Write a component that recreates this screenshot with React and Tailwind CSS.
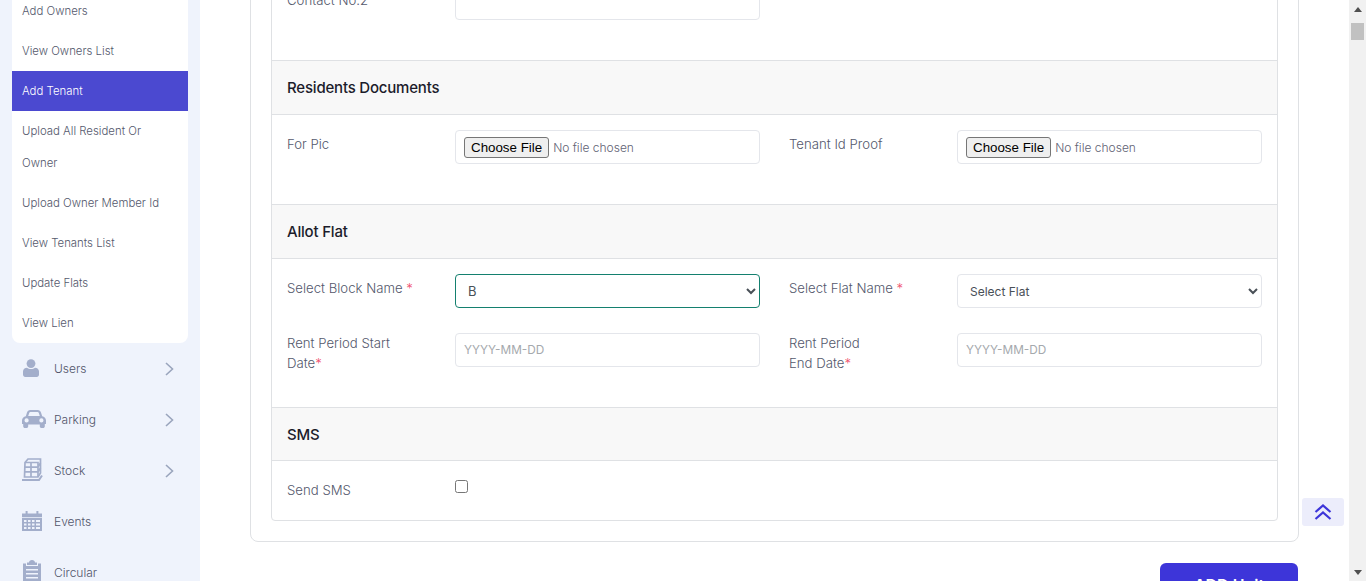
import React from "react";

const font = { fontFamily: "Inter, 'Noto Sans', sans-serif" };

const subItems = [
  { label: ["Add Owners"] },
  { label: ["View Owners List"] },
  { label: ["Add Tenant"], active: true },
  { label: ["Upload All Resident Or", "Owner"] },
  { label: ["Upload Owner Member Id"] },
  { label: ["View Tenants List"] },
  { label: ["Update Flats"] },
  { label: ["View Lien"] },
];

const UserIcon = () => (
  <svg className="ml-[2px]" width="16" height="18" viewBox="0 0 16 18" fill="#a3aecb">
    <circle cx="8" cy="4.6" r="4.4" />
    <path d="M0 15.5V12.5C0 10 1.8 8.7 4 8.7C5 9.6 6.4 10 8 10C9.6 10 11 9.6 12 8.7C14.2 8.7 16 10 16 12.5V15.5C16 17 15 18 13.8 18H2.2C1 18 0 17 0 15.5Z" />
  </svg>
);
const CarIcon = () => (
  <svg className="ml-[1px]" width="24" height="18" viewBox="0 0 24 18" fill="#a3aecb">
    <path fillRule="evenodd" d="M5 2.5C5.5 1 6.6 0 8.2 0H15.8C17.4 0 18.5 1 19 2.5L20.2 6.2C22.4 6.6 24 8.2 24 10.4V14H22.8V16.2C22.8 17.2 22 18 21 18H19.6C18.6 18 17.8 17.2 17.8 16.2V14.6H6.2V16.2C6.2 17.2 5.4 18 4.4 18H3C2 18 1.2 17.2 1.2 16.2V14H0V10.4C0 8.2 1.6 6.6 3.8 6.2L5 2.5ZM7.2 3L6.2 6H17.8L16.8 3C16.6 2.4 16.2 2.1 15.6 2.1H8.4C7.8 2.1 7.4 2.4 7.2 3ZM4.6 8.3A2.1 2.1 0 1 0 4.6 12.5A2.1 2.1 0 1 0 4.6 8.3ZM19.4 8.3A2.1 2.1 0 1 0 19.4 12.5A2.1 2.1 0 1 0 19.4 8.3Z" />
  </svg>
);
const StockIcon = () => (
  <svg width="22" height="23" viewBox="0 0 22 23" fill="none" stroke="#a3aecb" strokeWidth="1.7">
    <path d="M4 4.5 7 1H19.5V15L17 19H3.5Z" />
    <path d="M4 4.5H17V19M3.8 9.2H17M3.7 13.9H17M10 4.5V19M19.5 5 17 9M19.5 10 17 14" />
    <path d="M1 22H18L21 17.5" strokeWidth="2" />
  </svg>
);
const CalendarIcon = () => (
  <svg className="ml-[1px]" width="20" height="20" viewBox="0 0 20 20" fill="#a3aecb">
    <path d="M0 2.5H3.6V0H5.6V2.5H14.4V0H16.4V2.5H20V6.2H0Z" />
    <path fillRule="evenodd" d="M0 7H20V20H0ZM2 9V11H4.5V9ZM6 9V11H8.5V9ZM10 9V11H12.5V9ZM14 9V11H18V9ZM2 12.5V14.5H4.5V12.5ZM6 12.5V14.5H8.5V12.5ZM10 12.5V14.5H12.5V12.5ZM14 12.5V14.5H18V12.5ZM2 16V18H4.5V16ZM6 16V18H8.5V16ZM10 16V18H12.5V16ZM14 16V18H18V16Z" />
  </svg>
);
const ClipboardIcon = () => (
  <svg className="ml-[2px]" width="18" height="24" viewBox="0 0 18 24" fill="#a3aecb">
    <path fillRule="evenodd" d="M6 2.5C6 1 7.3 0 9 0C10.7 0 12 1 12 2.5H14V5H4V2.5ZM0 3.5H3V6H15V3.5H18V24H0ZM3 9V10.5H15V9ZM3 13V14.5H15V13ZM3 17V18.5H15V17Z" />
  </svg>
);

const navItems = [
  { label: "Users", icon: <UserIcon />, chevron: true },
  { label: "Parking", icon: <CarIcon />, chevron: true },
  { label: "Stock", icon: <StockIcon />, chevron: true },
  { label: "Events", icon: <CalendarIcon /> },
  { label: "Circular", icon: <ClipboardIcon /> },
];

const inputCls =
  "block w-[305px] h-[34px] rounded-[4px] border border-[#e4e6eb] bg-white px-2 text-[11.8px] text-[#495057] placeholder:text-[#a5a9ad] outline-none";
const fileCls =
  "block w-[305px] h-[34px] rounded-[4px] border border-[#e4e6eb] bg-white pl-2 pt-[6px] text-[12px] font-[350] text-[#5f6274] file:h-[21px] file:mr-1 file:rounded-[3px] file:border file:border-solid file:border-[#767676] file:bg-[#efefef] file:px-[6px] file:text-[13.33px] file:leading-normal file:text-black file:[font-family:Arial,'Liberation_Sans',sans-serif]";
const selectCls =
  "block w-[305px] h-[34px] rounded-[4px] border bg-white pl-2 text-[12px] text-[#495057] outline-none";

function Label({ children, cls = "pt-[4px]" }) {
  return <div className={`text-[13.2px] font-[350] leading-[20px] text-[#54586c] ${cls}`}>{children}</div>;
}

const Req = () => <span className="text-[#f0506e]">*</span>;

function SectionHeader({ children, cls = "h-[55px] pt-[1px]" }) {
  return (
    <div className={`${cls} flex items-center border-y border-[#dfe1e4] bg-[#f8f8f8] px-[15px] text-[15px] font-[450] text-[#1c1c2b] tracking-[-0.2px]`}>
      {children}
    </div>
  );
}

const rowCls = "grid grid-cols-[168px_334px_168px_305px] px-[15px]";

export default function App() {
  return (
    <div style={font} className="relative flex h-[581px] w-[1366px] overflow-hidden bg-white">
      {/* Sidebar */}
      <aside className="w-[200px] shrink-0 bg-[#eff3fc]">
        <div className="mx-3 -mt-[9px] overflow-hidden rounded-b-[8px] bg-white">
          {subItems.map((item) => (
            <div
              key={item.label[0]}
              className={`px-[10px] py-1 text-[11.4px] font-[350] leading-[32px] ${
                item.active ? "bg-[#4b49d0] text-white" : "text-[#54586c]"
              }`}
            >
              {item.label.map((line) => (
                <div key={line}>{line}</div>
              ))}
            </div>
          ))}
        </div>
        {navItems.map((n) => (
          <div key={n.label} className="flex h-[51px] items-center pl-[21px] pr-[26px] text-[12px] font-[350] text-[#52556a]">
            <span className="flex w-[33px] shrink-0 items-center -translate-y-[1px]">{n.icon}</span>
            <span className="flex-1">{n.label}</span>
            {n.chevron && (
              <svg width="9" height="14" viewBox="0 0 9 14" fill="none" stroke="#9aa5bd" strokeWidth="1.6">
                <path d="M1 1L7.5 7L1 13" />
              </svg>
            )}
          </div>
        ))}
      </aside>

      {/* Main */}
      <main className="flex-1 min-w-0 pl-[50px] pr-[50px]">
        <div className="-mt-[60px] rounded-[8px] border border-[#dfe1e4] p-5">
          <div className="rounded-[4px] border border-[#dfe1e4]">
            <div className={`${rowCls} pt-[24px] pb-[40px]`}>
              <Label>Contact No.2</Label>
              <input className={inputCls} />
            </div>

            <SectionHeader>Residents Documents</SectionHeader>
            <div className={`${rowCls} pt-[15px] pb-[40px]`}>
              <Label>For Pic</Label>
              <input type="file" className={fileCls} />
              <Label>Tenant Id Proof</Label>
              <input type="file" className={fileCls} />
            </div>

            <SectionHeader>Allot Flat</SectionHeader>
            <div className={`${rowCls} gap-y-[25px] pt-[15px] pb-[34px]`}>
              <Label>
                Select Block Name <Req />
              </Label>
              <select className={`${selectCls} border-[#14806f] text-[13px]`} defaultValue="B">
                <option>B</option>
              </select>
              <Label>
                Select Flat Name <Req />
              </Label>
              <select className={`${selectCls} border-[#e4e6eb]`} defaultValue="Select Flat">
                <option>Select Flat</option>
              </select>
              <Label cls="w-[125px]">
                Rent Period Start Date
                <Req />
              </Label>
              <input className={inputCls} placeholder="YYYY-MM-DD" />
              <Label cls="">
                Rent Period
                <br />
                End Date
                <Req />
              </Label>
              <input className={inputCls} placeholder="YYYY-MM-DD" />
            </div>

            <SectionHeader cls="h-[54px] pt-[2px]">SMS</SectionHeader>
            <div className={`${rowCls} h-[59px]`}>
              <Label cls="pt-[19px]">Send SMS</Label>
              <div className="pt-[19px]">
                <input type="checkbox" className="block h-[13px] w-[13px]" />
              </div>
            </div>
          </div>
        </div>
        <div className="mt-[21px] mr-[1px] flex justify-end">
          <button className="h-[44px] w-[138px] rounded-[6px] bg-[#3d35d9] text-[16px] font-semibold text-white">
            ADD Unit
          </button>
        </div>
      </main>

      {/* Scrollbar */}
      <div className="flex w-[17px] shrink-0 flex-col items-center bg-[#f1f1f1]">
        <div className="flex h-[17px] items-center pt-[1px]">
          <svg width="8" height="5" viewBox="0 0 8 5" fill="#505050"><path d="M4 0L8 5H0Z" /></svg>
        </div>
        <div className="mt-[6px] h-[17px] w-[13px] bg-[#c1c1c1]" />
        <div className="mt-auto flex h-[17px] items-center">
          <svg width="8" height="5" viewBox="0 0 8 5" fill="#505050"><path d="M4 5L0 0H8Z" /></svg>
        </div>
      </div>

      {/* Back to top */}
      <div className="absolute left-[1302px] top-[498px] flex h-[28px] w-[42px] items-center justify-center rounded-[3px] bg-[#ecedfb]">
        <svg width="18" height="16" viewBox="0 0 18 16" fill="none" stroke="#3d35d9" strokeWidth="2.2">
          <path d="M1.5 8L9 1.5L16.5 8M1.5 15L9 8.5L16.5 15" />
        </svg>
      </div>
    </div>
  );
}
